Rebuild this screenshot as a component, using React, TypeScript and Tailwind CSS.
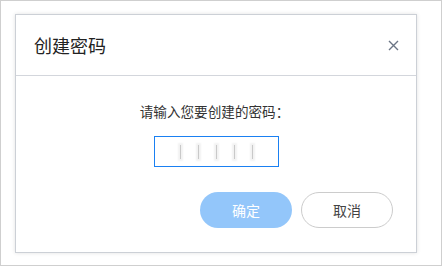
import React, { useState } from 'react';

const font = { fontFamily: '"Noto Sans CJK SC", "Noto Sans", sans-serif' };

export default function App() {
  const [slots] = useState([0, 1, 2, 3, 4]);

  return (
    <div className="w-[442px] h-[266px] border border-[#cfcfcf] bg-white pl-[14px] pt-[13px]" style={font}>
      <div className="w-[402px] h-[239px] border border-[#ccd0d6] bg-white shadow-[0_0_4px_rgba(0,0,0,0.12)] flex flex-col">
        <div className="h-[61px] shrink-0 border-b border-[#d3d6dc] flex items-center justify-between pl-[18px] pr-[16px]">
          <h1 className="text-[18px] leading-[24px] text-[#222]">创建密码</h1>
          <button className="w-[14px] h-[14px] flex items-center justify-center text-[#6b7585]">
            <svg width="11" height="11" viewBox="0 0 11 11" fill="none" stroke="currentColor" strokeWidth="1.4">
              <path d="M1 1 L10 10 M10 1 L1 10" />
            </svg>
          </button>
        </div>

        <div className="flex flex-col items-center">
          <p className="mt-[25px] text-[13.6px] leading-[20px] text-[#333] pr-[3px]">请输入您要创建的密码：</p>
          <div className="mt-[15px] w-[125px] h-[31px] border border-[#1a80f2] flex items-center justify-center gap-[17px]">
            {slots.map((s) => (
              <span key={s} className="w-px h-[14px] bg-[#c9c9c9] shadow-[0_0_2px_2px_#f2f2f2]" />
            ))}
          </div>
        </div>

        <div className="mt-[25px] flex justify-end gap-[9px] pr-[23px]">
          <button className="w-[92px] h-[36px] rounded-full bg-[#93c6fa] text-white text-[14px]">确定</button>
          <button className="w-[92px] h-[36px] rounded-full border border-[#cccccc] bg-white text-[#444] text-[14px]">取消</button>
        </div>
      </div>
    </div>
  );
}
